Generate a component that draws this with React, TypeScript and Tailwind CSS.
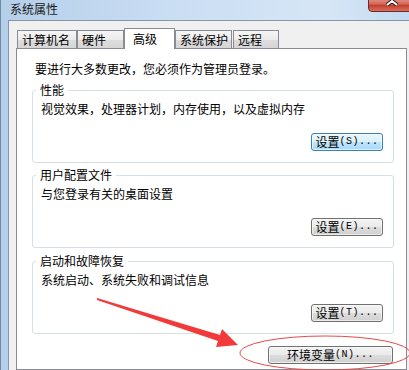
const btnGray =
  'bg-[linear-gradient(to_bottom,#f2f2f2_0%,#ebebeb_50%,#dddddd_51%,#cfcfcf_100%)] border-[#707070]'
const btnBlue =
  'bg-[linear-gradient(to_bottom,#eaf6fd_0%,#d9f0fc_50%,#bee6fd_51%,#a7d9f5_100%)] border-[#3c7fb1]'

function WinButton(props: { label: string; hotkey: string; width: string; blue?: boolean; className?: string }) {
  return (
    <button
      className={`${props.width} h-[18px] border rounded-[3px] ${props.blue ? btnBlue : btnGray} shadow-[inset_0_0_0_1px_rgba(255,255,255,0.6)] flex items-center justify-center text-[12px] leading-4 text-black ${props.className ?? ''}`}
    >
      <span>{props.label}</span>
      <span className="font-['Liberation_Mono',monospace] text-[10px] tracking-[0.5px]">
        ({props.hotkey})...
      </span>
    </button>
  )
}

function GroupBox(props: { title: string; desc: string; hotkey: string; blue?: boolean; className?: string }) {
  return (
    <div
      className={`relative h-[73px] ml-[15px] mr-[12px] border border-[#d5dfe5] rounded-[3px] flex flex-col ${props.className ?? ''}`}
    >
      <span className="absolute left-[3px] -top-[9px] px-[4px] bg-white leading-4">{props.title}</span>
      <p className="pl-[8px] pt-[10px] leading-4">{props.desc}</p>
      <WinButton label="设置" hotkey={props.hotkey} width="w-[72px]" blue={props.blue} className="self-end mt-auto mb-[11px] mr-[10px]" />
    </div>
  )
}

const tabs = ['计算机名', '硬件', '高级', '系统保护', '远程']
const tabWidths = ['w-[60px]', 'w-[47px]', 'w-[51px]', 'w-[57px]', 'w-[46px]']

export default function App() {
  return (
    <div className="relative w-[409px] h-[370px] overflow-hidden border-l border-[#6f8aa6] bg-[linear-gradient(to_right,#b5cfea,#c9ddf3_40%,#d6e6f6_80%,#c4daf1)] text-[12px] text-black font-['Noto_Sans_CJK_SC',sans-serif]">
      {/* title bar */}
      <div className="relative h-[20px] pl-[9px] pt-[1px] leading-4 text-[#1a1a1a]">
        系统属性
        <div className="absolute left-[367px] -top-[4px] w-[50px] h-[16px] rounded-b-[4px] border border-[#6b2a22] bg-[linear-gradient(to_bottom,#e8a196,#d3685a_50%,#c2402f_60%,#d8705f)]">
          <svg className="absolute left-[15px] -top-[1px]" width="16" height="10" viewBox="0 0 16 10">
            <path d="M3 0 L8 4 L13 0 M3 9 L8 5 L13 9" stroke="#3b1410" strokeWidth="4" fill="none" />
            <path d="M3 0 L8 4 L13 0 M3 9 L8 5 L13 9" stroke="#ffffff" strokeWidth="2" fill="none" />
          </svg>
        </div>
      </div>

      {/* dialog body */}
      <div className="flex h-[350px] pl-[7px]">
        <div className="flex-1 flex flex-col bg-[#f0f0f0] border-l border-t border-[#8796a7] pl-[7px] pt-[7px]">
          <div className="relative z-10 flex items-end h-[21px] -mb-px pl-[1px]">
            {tabs.map((t, i) =>
              i === 2 ? (
                <div
                  key={t}
                  className={`${tabWidths[i]} h-[21px] bg-white border-t border-l border-r border-[#898c95] pl-[8px] pt-[2px] leading-4`}
                >
                  {t}
                </div>
              ) : (
                <div
                  key={t}
                  className={`${tabWidths[i]} h-[18px] mb-px ${i === 4 ? 'ml-px' : ''} bg-[linear-gradient(to_bottom,#f5f5f5,#ebebeb_50%,#dddddd_51%,#d6d6d6)] border-t border-l border-r border-[#898c95] pl-[4px] pt-[1px] leading-4`}
                >
                  {t}
                </div>
              )
            )}
          </div>
          <div className="flex-1 bg-white border border-[#898c95] mr-[2px] flex flex-col">
            <p className="pl-[18px] pt-[12px] leading-4">要进行大多数更改，您必须作为管理员登录。</p>
            <GroupBox
              title="性能"
              desc="视觉效果，处理器计划，内存使用，以及虚拟内存"
              hotkey="S"
              blue
              className="mt-[13px]"
            />
            <GroupBox title="用户配置文件" desc="与您登录有关的桌面设置" hotkey="E" className="mt-[12px]" />
            <GroupBox title="启动和故障恢复" desc="系统启动、系统失败和调试信息" hotkey="T" className="mt-[13px]" />
            <WinButton label="环境变量" hotkey="N" width="w-[125px]" className="self-end mt-[12px] mr-[13px]" />
          </div>
        </div>
      </div>

      {/* annotation overlay */}
      <svg className="absolute inset-0 pointer-events-none" width="409" height="370" viewBox="0 0 409 370">
        <polygon points="96,298 219,335 221,329 237,345 215,347 217,341 96,300" fill="#f23a3a" />
        <ellipse cx="324" cy="353" rx="85" ry="17" stroke="#e84848" strokeWidth="1" fill="none" />
      </svg>
    </div>
  )
}
